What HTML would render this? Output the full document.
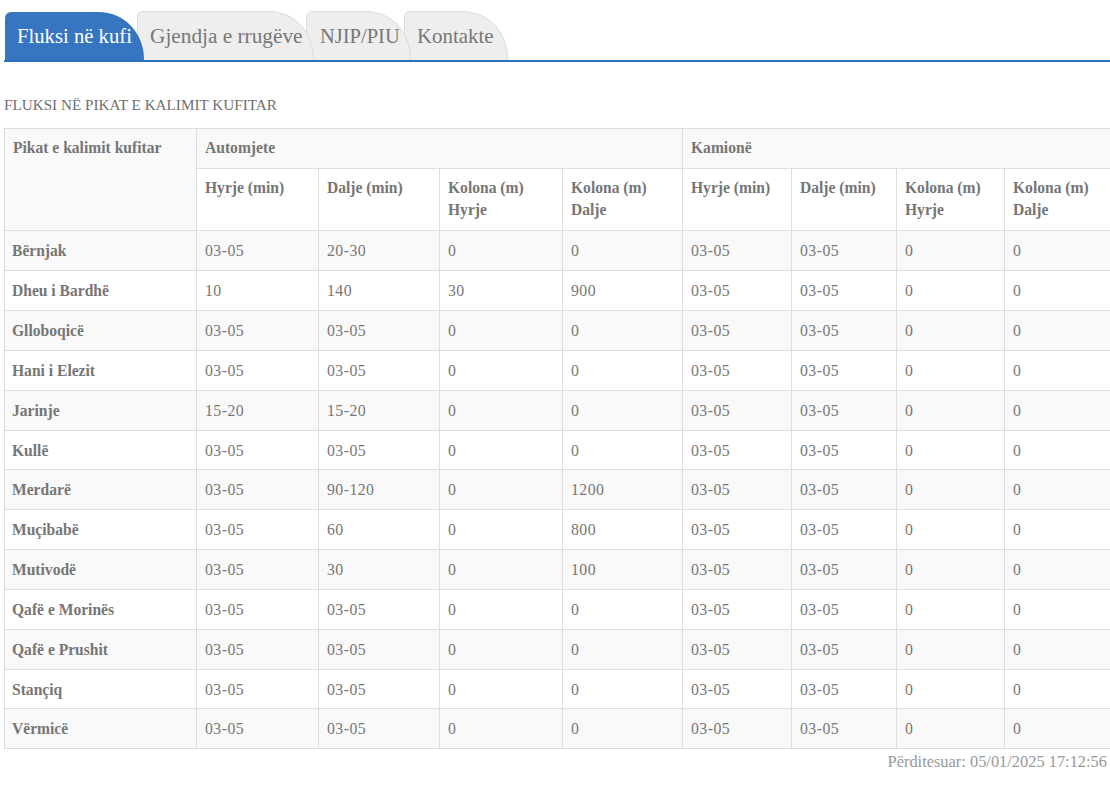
<!DOCTYPE html>
<html>
<head>
<meta charset="utf-8">
<style>
html,body{margin:0;padding:0;background:#fff;width:1110px;height:787px;overflow:hidden;position:relative;font-family:"Liberation Serif",serif;}
.tab{position:absolute;box-sizing:border-box;top:11px;height:49px;background:#eeeeee;border:1px solid #dddddd;border-bottom:none;border-radius:6px 45px 0 0/6px 47px 0 0;color:#777;font-size:20.7px;white-space:nowrap;}
.tab span{position:absolute;line-height:24px;}
.t1{left:5px;top:12px;height:48px;width:139px;background:#3676c0;border:none;color:#fff;z-index:4;}
.t2{left:137px;width:177px;z-index:3;}
.t3{left:306px;width:105px;z-index:2;}
.t4{left:404px;width:104px;z-index:1;}
.line{position:absolute;left:4px;top:60px;width:1106px;height:2px;background:#2f6fbf;z-index:5;}
.title{position:absolute;left:4px;top:95px;font-size:15.2px;color:#6e6e6e;white-space:nowrap;line-height:20px;}
.c{position:absolute;box-sizing:border-box;border-left:1px solid #ddd;border-top:1px solid #ddd;}
.g{background:#f9f9f9;}
.tx{position:absolute;white-space:nowrap;color:#777;font-size:15.8px;letter-spacing:0.45px;line-height:20px;}
.n{top:3px}
.b{font-weight:bold;color:#767676;font-size:17px;line-height:21.5px;transform:scaleX(0.916);transform-origin:0 0;letter-spacing:0;}
.foot{position:absolute;right:3px;top:752px;font-size:16.4px;color:#999;white-space:nowrap;line-height:20px;}
</style>
</head>
<body>
<div class="tab t1"><span style="left:12px;top:12px">Fluksi në kufi</span></div>
<div class="tab t2"><span style="left:12px;top:12px;font-size:21.3px">Gjendja e rrugëve</span></div>
<div class="tab t3"><span style="left:13px;top:12px;font-size:20.5px">NJIP/PIU</span></div>
<div class="tab t4"><span style="left:12px;top:12px;font-size:20.9px">Kontakte</span></div>
<div class="line"></div>
<div class="title">FLUKSI NË PIKAT E KALIMIT KUFITAR</div>
<div class="c g" style="left:4px;top:128px;width:192px;height:102px"></div><div class="c g" style="left:196px;top:128px;width:486px;height:40px"></div><div class="c g" style="left:682px;top:128px;width:430px;height:40px"></div><div class="c" style="left:196px;top:168px;width:122px;height:62px"></div><div class="c" style="left:318px;top:168px;width:121px;height:62px"></div><div class="c" style="left:439px;top:168px;width:123px;height:62px"></div><div class="c" style="left:562px;top:168px;width:120px;height:62px"></div><div class="c" style="left:682px;top:168px;width:109px;height:62px"></div><div class="c" style="left:791px;top:168px;width:105px;height:62px"></div><div class="c" style="left:896px;top:168px;width:108px;height:62px"></div><div class="c" style="left:1004px;top:168px;width:108px;height:62px"></div><div class="c g" style="left:4px;top:230px;width:192px;height:40px"></div><div class="c g" style="left:196px;top:230px;width:122px;height:40px"></div><div class="c g" style="left:318px;top:230px;width:121px;height:40px"></div><div class="c g" style="left:439px;top:230px;width:123px;height:40px"></div><div class="c g" style="left:562px;top:230px;width:120px;height:40px"></div><div class="c g" style="left:682px;top:230px;width:109px;height:40px"></div><div class="c g" style="left:791px;top:230px;width:105px;height:40px"></div><div class="c g" style="left:896px;top:230px;width:108px;height:40px"></div><div class="c g" style="left:1004px;top:230px;width:108px;height:40px"></div><div class="c" style="left:4px;top:270px;width:192px;height:40px"></div><div class="c" style="left:196px;top:270px;width:122px;height:40px"></div><div class="c" style="left:318px;top:270px;width:121px;height:40px"></div><div class="c" style="left:439px;top:270px;width:123px;height:40px"></div><div class="c" style="left:562px;top:270px;width:120px;height:40px"></div><div class="c" style="left:682px;top:270px;width:109px;height:40px"></div><div class="c" style="left:791px;top:270px;width:105px;height:40px"></div><div class="c" style="left:896px;top:270px;width:108px;height:40px"></div><div class="c" style="left:1004px;top:270px;width:108px;height:40px"></div><div class="c g" style="left:4px;top:310px;width:192px;height:40px"></div><div class="c g" style="left:196px;top:310px;width:122px;height:40px"></div><div class="c g" style="left:318px;top:310px;width:121px;height:40px"></div><div class="c g" style="left:439px;top:310px;width:123px;height:40px"></div><div class="c g" style="left:562px;top:310px;width:120px;height:40px"></div><div class="c g" style="left:682px;top:310px;width:109px;height:40px"></div><div class="c g" style="left:791px;top:310px;width:105px;height:40px"></div><div class="c g" style="left:896px;top:310px;width:108px;height:40px"></div><div class="c g" style="left:1004px;top:310px;width:108px;height:40px"></div><div class="c" style="left:4px;top:350px;width:192px;height:40px"></div><div class="c" style="left:196px;top:350px;width:122px;height:40px"></div><div class="c" style="left:318px;top:350px;width:121px;height:40px"></div><div class="c" style="left:439px;top:350px;width:123px;height:40px"></div><div class="c" style="left:562px;top:350px;width:120px;height:40px"></div><div class="c" style="left:682px;top:350px;width:109px;height:40px"></div><div class="c" style="left:791px;top:350px;width:105px;height:40px"></div><div class="c" style="left:896px;top:350px;width:108px;height:40px"></div><div class="c" style="left:1004px;top:350px;width:108px;height:40px"></div><div class="c g" style="left:4px;top:390px;width:192px;height:40px"></div><div class="c g" style="left:196px;top:390px;width:122px;height:40px"></div><div class="c g" style="left:318px;top:390px;width:121px;height:40px"></div><div class="c g" style="left:439px;top:390px;width:123px;height:40px"></div><div class="c g" style="left:562px;top:390px;width:120px;height:40px"></div><div class="c g" style="left:682px;top:390px;width:109px;height:40px"></div><div class="c g" style="left:791px;top:390px;width:105px;height:40px"></div><div class="c g" style="left:896px;top:390px;width:108px;height:40px"></div><div class="c g" style="left:1004px;top:390px;width:108px;height:40px"></div><div class="c" style="left:4px;top:430px;width:192px;height:39px"></div><div class="c" style="left:196px;top:430px;width:122px;height:39px"></div><div class="c" style="left:318px;top:430px;width:121px;height:39px"></div><div class="c" style="left:439px;top:430px;width:123px;height:39px"></div><div class="c" style="left:562px;top:430px;width:120px;height:39px"></div><div class="c" style="left:682px;top:430px;width:109px;height:39px"></div><div class="c" style="left:791px;top:430px;width:105px;height:39px"></div><div class="c" style="left:896px;top:430px;width:108px;height:39px"></div><div class="c" style="left:1004px;top:430px;width:108px;height:39px"></div><div class="c g" style="left:4px;top:469px;width:192px;height:40px"></div><div class="c g" style="left:196px;top:469px;width:122px;height:40px"></div><div class="c g" style="left:318px;top:469px;width:121px;height:40px"></div><div class="c g" style="left:439px;top:469px;width:123px;height:40px"></div><div class="c g" style="left:562px;top:469px;width:120px;height:40px"></div><div class="c g" style="left:682px;top:469px;width:109px;height:40px"></div><div class="c g" style="left:791px;top:469px;width:105px;height:40px"></div><div class="c g" style="left:896px;top:469px;width:108px;height:40px"></div><div class="c g" style="left:1004px;top:469px;width:108px;height:40px"></div><div class="c" style="left:4px;top:509px;width:192px;height:40px"></div><div class="c" style="left:196px;top:509px;width:122px;height:40px"></div><div class="c" style="left:318px;top:509px;width:121px;height:40px"></div><div class="c" style="left:439px;top:509px;width:123px;height:40px"></div><div class="c" style="left:562px;top:509px;width:120px;height:40px"></div><div class="c" style="left:682px;top:509px;width:109px;height:40px"></div><div class="c" style="left:791px;top:509px;width:105px;height:40px"></div><div class="c" style="left:896px;top:509px;width:108px;height:40px"></div><div class="c" style="left:1004px;top:509px;width:108px;height:40px"></div><div class="c g" style="left:4px;top:549px;width:192px;height:40px"></div><div class="c g" style="left:196px;top:549px;width:122px;height:40px"></div><div class="c g" style="left:318px;top:549px;width:121px;height:40px"></div><div class="c g" style="left:439px;top:549px;width:123px;height:40px"></div><div class="c g" style="left:562px;top:549px;width:120px;height:40px"></div><div class="c g" style="left:682px;top:549px;width:109px;height:40px"></div><div class="c g" style="left:791px;top:549px;width:105px;height:40px"></div><div class="c g" style="left:896px;top:549px;width:108px;height:40px"></div><div class="c g" style="left:1004px;top:549px;width:108px;height:40px"></div><div class="c" style="left:4px;top:589px;width:192px;height:40px"></div><div class="c" style="left:196px;top:589px;width:122px;height:40px"></div><div class="c" style="left:318px;top:589px;width:121px;height:40px"></div><div class="c" style="left:439px;top:589px;width:123px;height:40px"></div><div class="c" style="left:562px;top:589px;width:120px;height:40px"></div><div class="c" style="left:682px;top:589px;width:109px;height:40px"></div><div class="c" style="left:791px;top:589px;width:105px;height:40px"></div><div class="c" style="left:896px;top:589px;width:108px;height:40px"></div><div class="c" style="left:1004px;top:589px;width:108px;height:40px"></div><div class="c g" style="left:4px;top:629px;width:192px;height:40px"></div><div class="c g" style="left:196px;top:629px;width:122px;height:40px"></div><div class="c g" style="left:318px;top:629px;width:121px;height:40px"></div><div class="c g" style="left:439px;top:629px;width:123px;height:40px"></div><div class="c g" style="left:562px;top:629px;width:120px;height:40px"></div><div class="c g" style="left:682px;top:629px;width:109px;height:40px"></div><div class="c g" style="left:791px;top:629px;width:105px;height:40px"></div><div class="c g" style="left:896px;top:629px;width:108px;height:40px"></div><div class="c g" style="left:1004px;top:629px;width:108px;height:40px"></div><div class="c" style="left:4px;top:669px;width:192px;height:39px"></div><div class="c" style="left:196px;top:669px;width:122px;height:39px"></div><div class="c" style="left:318px;top:669px;width:121px;height:39px"></div><div class="c" style="left:439px;top:669px;width:123px;height:39px"></div><div class="c" style="left:562px;top:669px;width:120px;height:39px"></div><div class="c" style="left:682px;top:669px;width:109px;height:39px"></div><div class="c" style="left:791px;top:669px;width:105px;height:39px"></div><div class="c" style="left:896px;top:669px;width:108px;height:39px"></div><div class="c" style="left:1004px;top:669px;width:108px;height:39px"></div><div class="c g" style="left:4px;top:708px;width:192px;height:40px"></div><div class="c g" style="left:196px;top:708px;width:122px;height:40px"></div><div class="c g" style="left:318px;top:708px;width:121px;height:40px"></div><div class="c g" style="left:439px;top:708px;width:123px;height:40px"></div><div class="c g" style="left:562px;top:708px;width:120px;height:40px"></div><div class="c g" style="left:682px;top:708px;width:109px;height:40px"></div><div class="c g" style="left:791px;top:708px;width:105px;height:40px"></div><div class="c g" style="left:896px;top:708px;width:108px;height:40px"></div><div class="c g" style="left:1004px;top:708px;width:108px;height:40px"></div><div style="position:absolute;left:4px;top:748px;width:1108px;height:1px;background:#ddd"></div>
<div class="tx b" style="left:13px;top:137px">Pikat e kalimit kufitar</div><div class="tx b" style="left:205px;top:137px">Automjete</div><div class="tx b" style="left:691px;top:137px">Kamionë</div><div class="tx b" style="left:205px;top:177px">Hyrje (min)</div><div class="tx b" style="left:327px;top:177px">Dalje (min)</div><div class="tx b" style="left:448px;top:177px">Kolona (m)<br>Hyrje</div><div class="tx b" style="left:571px;top:177px">Kolona (m)<br>Dalje</div><div class="tx b" style="left:691px;top:177px">Hyrje (min)</div><div class="tx b" style="left:800px;top:177px">Dalje (min)</div><div class="tx b" style="left:905px;top:177px">Kolona (m)<br>Hyrje</div><div class="tx b" style="left:1013px;top:177px">Kolona (m)<br>Dalje</div><div class="tx b" style="left:12px;top:240px">Bërnjak</div><div class="tx" style="left:205px;top:241px">03-05</div><div class="tx" style="left:327px;top:241px">20-30</div><div class="tx" style="left:448px;top:241px">0</div><div class="tx" style="left:571px;top:241px">0</div><div class="tx" style="left:691px;top:241px">03-05</div><div class="tx" style="left:800px;top:241px">03-05</div><div class="tx" style="left:905px;top:241px">0</div><div class="tx" style="left:1013px;top:241px">0</div>
<div class="tx b" style="left:12px;top:280px">Dheu i Bardhë</div><div class="tx" style="left:205px;top:281px">10</div><div class="tx" style="left:327px;top:281px">140</div><div class="tx" style="left:448px;top:281px">30</div><div class="tx" style="left:571px;top:281px">900</div><div class="tx" style="left:691px;top:281px">03-05</div><div class="tx" style="left:800px;top:281px">03-05</div><div class="tx" style="left:905px;top:281px">0</div><div class="tx" style="left:1013px;top:281px">0</div>
<div class="tx b" style="left:12px;top:320px">Glloboqicë</div><div class="tx" style="left:205px;top:321px">03-05</div><div class="tx" style="left:327px;top:321px">03-05</div><div class="tx" style="left:448px;top:321px">0</div><div class="tx" style="left:571px;top:321px">0</div><div class="tx" style="left:691px;top:321px">03-05</div><div class="tx" style="left:800px;top:321px">03-05</div><div class="tx" style="left:905px;top:321px">0</div><div class="tx" style="left:1013px;top:321px">0</div>
<div class="tx b" style="left:12px;top:360px">Hani i Elezit</div><div class="tx" style="left:205px;top:361px">03-05</div><div class="tx" style="left:327px;top:361px">03-05</div><div class="tx" style="left:448px;top:361px">0</div><div class="tx" style="left:571px;top:361px">0</div><div class="tx" style="left:691px;top:361px">03-05</div><div class="tx" style="left:800px;top:361px">03-05</div><div class="tx" style="left:905px;top:361px">0</div><div class="tx" style="left:1013px;top:361px">0</div>
<div class="tx b" style="left:12px;top:400px">Jarinje</div><div class="tx" style="left:205px;top:401px">15-20</div><div class="tx" style="left:327px;top:401px">15-20</div><div class="tx" style="left:448px;top:401px">0</div><div class="tx" style="left:571px;top:401px">0</div><div class="tx" style="left:691px;top:401px">03-05</div><div class="tx" style="left:800px;top:401px">03-05</div><div class="tx" style="left:905px;top:401px">0</div><div class="tx" style="left:1013px;top:401px">0</div>
<div class="tx b" style="left:12px;top:440px">Kullë</div><div class="tx" style="left:205px;top:441px">03-05</div><div class="tx" style="left:327px;top:441px">03-05</div><div class="tx" style="left:448px;top:441px">0</div><div class="tx" style="left:571px;top:441px">0</div><div class="tx" style="left:691px;top:441px">03-05</div><div class="tx" style="left:800px;top:441px">03-05</div><div class="tx" style="left:905px;top:441px">0</div><div class="tx" style="left:1013px;top:441px">0</div>
<div class="tx b" style="left:12px;top:479px">Merdarë</div><div class="tx" style="left:205px;top:480px">03-05</div><div class="tx" style="left:327px;top:480px">90-120</div><div class="tx" style="left:448px;top:480px">0</div><div class="tx" style="left:571px;top:480px">1200</div><div class="tx" style="left:691px;top:480px">03-05</div><div class="tx" style="left:800px;top:480px">03-05</div><div class="tx" style="left:905px;top:480px">0</div><div class="tx" style="left:1013px;top:480px">0</div>
<div class="tx b" style="left:12px;top:519px">Muçibabë</div><div class="tx" style="left:205px;top:520px">03-05</div><div class="tx" style="left:327px;top:520px">60</div><div class="tx" style="left:448px;top:520px">0</div><div class="tx" style="left:571px;top:520px">800</div><div class="tx" style="left:691px;top:520px">03-05</div><div class="tx" style="left:800px;top:520px">03-05</div><div class="tx" style="left:905px;top:520px">0</div><div class="tx" style="left:1013px;top:520px">0</div>
<div class="tx b" style="left:12px;top:559px">Mutivodë</div><div class="tx" style="left:205px;top:560px">03-05</div><div class="tx" style="left:327px;top:560px">30</div><div class="tx" style="left:448px;top:560px">0</div><div class="tx" style="left:571px;top:560px">100</div><div class="tx" style="left:691px;top:560px">03-05</div><div class="tx" style="left:800px;top:560px">03-05</div><div class="tx" style="left:905px;top:560px">0</div><div class="tx" style="left:1013px;top:560px">0</div>
<div class="tx b" style="left:12px;top:599px">Qafë e Morinës</div><div class="tx" style="left:205px;top:600px">03-05</div><div class="tx" style="left:327px;top:600px">03-05</div><div class="tx" style="left:448px;top:600px">0</div><div class="tx" style="left:571px;top:600px">0</div><div class="tx" style="left:691px;top:600px">03-05</div><div class="tx" style="left:800px;top:600px">03-05</div><div class="tx" style="left:905px;top:600px">0</div><div class="tx" style="left:1013px;top:600px">0</div>
<div class="tx b" style="left:12px;top:639px">Qafë e Prushit</div><div class="tx" style="left:205px;top:640px">03-05</div><div class="tx" style="left:327px;top:640px">03-05</div><div class="tx" style="left:448px;top:640px">0</div><div class="tx" style="left:571px;top:640px">0</div><div class="tx" style="left:691px;top:640px">03-05</div><div class="tx" style="left:800px;top:640px">03-05</div><div class="tx" style="left:905px;top:640px">0</div><div class="tx" style="left:1013px;top:640px">0</div>
<div class="tx b" style="left:12px;top:679px">Stançiq</div><div class="tx" style="left:205px;top:680px">03-05</div><div class="tx" style="left:327px;top:680px">03-05</div><div class="tx" style="left:448px;top:680px">0</div><div class="tx" style="left:571px;top:680px">0</div><div class="tx" style="left:691px;top:680px">03-05</div><div class="tx" style="left:800px;top:680px">03-05</div><div class="tx" style="left:905px;top:680px">0</div><div class="tx" style="left:1013px;top:680px">0</div>
<div class="tx b" style="left:12px;top:718px">Vërmicë</div><div class="tx" style="left:205px;top:719px">03-05</div><div class="tx" style="left:327px;top:719px">03-05</div><div class="tx" style="left:448px;top:719px">0</div><div class="tx" style="left:571px;top:719px">0</div><div class="tx" style="left:691px;top:719px">03-05</div><div class="tx" style="left:800px;top:719px">03-05</div><div class="tx" style="left:905px;top:719px">0</div><div class="tx" style="left:1013px;top:719px">0</div>
<div class="foot">Përditesuar: 05/01/2025 17:12:56</div>
</body>
</html>
